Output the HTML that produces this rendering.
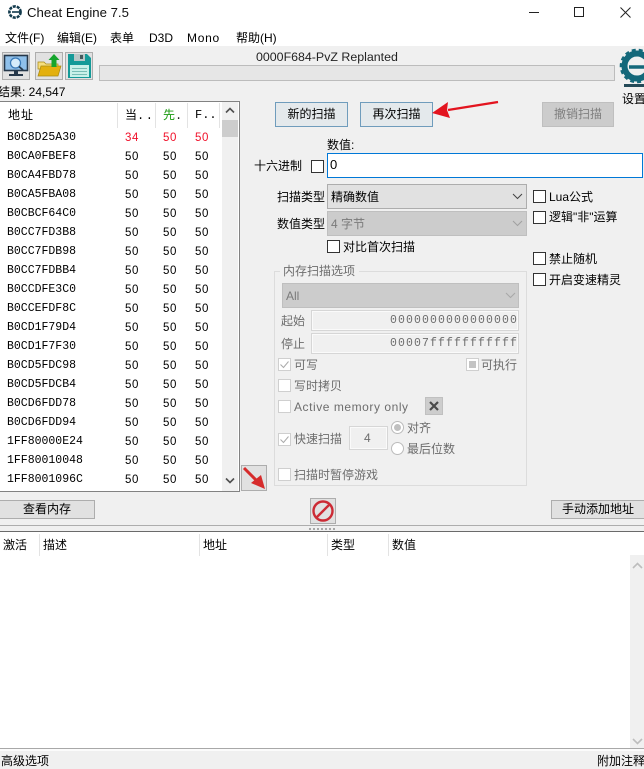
<!DOCTYPE html>
<html lang="zh"><head><meta charset="utf-8"><title>Cheat Engine 7.5</title>
<style>
html,body{margin:0;padding:0}
body{width:644px;height:769px;position:relative;overflow:hidden;background:#f0f0f0;font:12px "Liberation Sans","Noto Sans CJK SC",sans-serif;color:#000}
.a,.t,.b,.c,.r,.cell{position:absolute;box-sizing:border-box}
.t{white-space:nowrap;line-height:16px}
.g{color:#6d6d6d}
.b{background:#e1e1e1;border:1px solid #adadad;text-align:center;white-space:nowrap;line-height:22px}
.c{width:13px;height:13px;background:#fff;border:1px solid #333}
.d{border-color:#cfcfcf}
.r{width:13px;height:13px;border-radius:50%;background:#fff;border:1px solid #bbb}
.cell{white-space:nowrap;line-height:14px;margin-top:1px}
.ad{left:7px;font:11.5px "Liberation Mono",monospace;line-height:14px}
.v{font-size:11.5px;letter-spacing:.6px}
.red{color:#f0102a}
.hs{position:absolute;width:1px;background:#e3e3e3}
</style></head><body>
<div class="a" style="left:0;top:0;width:644px;height:46px;background:#fff"></div>
<svg class="a" style="left:7px;top:4px" width="15" height="16" viewBox="0 0 15 16"><circle cx="8" cy="8" r="5.6" fill="none" stroke="#123a4c" stroke-width="2.6" stroke-dasharray="3 1"/><path d="M5 8h8" stroke="#123a4c" stroke-width="1.6"/></svg>
<div class="t" style="left:27px;top:5px;font-size:13.2px;color:#111">Cheat Engine 7.5</div>
<div class="a" style="left:529px;top:12px;width:10px;height:1px;background:#222"></div>
<div class="a" style="left:574px;top:7px;width:10px;height:10px;border:1px solid #222"></div>
<svg class="a" style="left:620px;top:7px" width="11" height="11"><path d="M.5.5l10 10M10.500.5l-10 10" stroke="#222" fill="none"/></svg>

<div class="t" style="left:5px;top:30px">文件(F)</div>
<div class="t" style="left:57px;top:30px">编辑(E)</div>
<div class="t" style="left:110px;top:30px">表单</div>
<div class="t" style="left:149px;top:30px">D3D</div>
<div class="t" style="left:187px;top:30px;letter-spacing:.7px">Mono</div>
<div class="t" style="left:236px;top:30px">帮助(H)</div>

<!-- toolbar -->
<div class="a" style="left:2px;top:52px;width:28px;height:28px;background:#e1e1e1;border:1px solid #adadad"></div>
<svg class="a" style="left:3px;top:53px" width="26" height="26" viewBox="0 0 26 26"><rect x="1.500" y="2.500" width="23" height="15" fill="#8fc0ea" stroke="#26384a" stroke-width="1.600"/><rect x="11" y="18" width="4" height="3" fill="#26384a"/><rect x="6" y="21" width="14" height="2" fill="#26384a"/><circle cx="12.500" cy="10" r="5" fill="#d5ecfb" stroke="#3a7ab8" stroke-width="1.300"/><path d="M16 13.500l4 3.500" stroke="#26384a" stroke-width="1.800"/></svg>
<div class="a" style="left:35px;top:52px;width:28px;height:28px;background:#e1e1e1;border:1px solid #adadad"></div>
<svg class="a" style="left:36px;top:53px" width="26" height="26" viewBox="0 0 26 26"><path d="M2 9h6l2 2h12v5H2z" fill="#f6de7e" stroke="#a98912" stroke-width=".7"/><path d="M2 23l3-10h20l-3 10z" fill="#e3b00f" stroke="#a98912" stroke-width=".7"/><path d="M18 1l5.500 6H20.500v7h-5V7h-3z" fill="#15a52d"/></svg>
<div class="a" style="left:65px;top:52px;width:28px;height:28px;background:#e1e1e1;border:1px solid #adadad"></div>
<svg class="a" style="left:66px;top:53px" width="26" height="26" viewBox="0 0 26 26"><path d="M2 1h19l4 4v20H2z" fill="#149a98"/><rect x="8" y="1" width="11" height="7" fill="#b9c7c7"/><rect x="14" y="2" width="3" height="4" fill="#46595c"/><rect x="4" y="12" width="19" height="12" fill="#c9f0e9"/><path d="M6 15.500h15M6 18.500h15M6 21.500h15" stroke="#78bdb5"/></svg>

<div class="t" style="left:256px;top:49px;font-size:12.4px;color:#222">0000F684-PvZ Replanted</div>
<div class="a" style="left:99px;top:65px;width:516px;height:16px;background:#e6e6e6;border:1px solid #bcbcbc"></div>

<svg class="a" style="left:618px;top:46px" width="26" height="44" viewBox="0 0 26 44"><circle cx="19" cy="20" r="12.500" fill="none" stroke="#14687a" stroke-width="6"/><circle cx="19" cy="20" r="16" fill="none" stroke="#14687a" stroke-width="2.600" stroke-dasharray="4 3"/><path d="M11 21h15" stroke="#14687a" stroke-width="3.500"/><rect x="6" y="38" width="20" height="3" fill="#244a58"/></svg>
<div class="t" style="left:622px;top:91px">设置</div>
<div class="t" style="left:-2px;top:84px">结果: 24,547</div>

<!-- scan list -->
<div class="a" style="left:0;top:101px;width:240px;height:391px;background:#fff;border:1px solid #828282;border-left:0"></div>
<div class="hs" style="left:117px;top:103px;height:25px"></div><div class="hs" style="left:155px;top:103px;height:25px"></div><div class="hs" style="left:187px;top:103px;height:25px"></div><div class="hs" style="left:219px;top:103px;height:25px"></div>
<div class="t" style="left:8px;top:107px;letter-spacing:1px">地址</div>
<div class="t" style="left:125px;top:107px">当<span style="letter-spacing:1.500px;font-family:'Liberation Mono'">..</span></div>
<div class="t" style="left:163px;top:107px;color:#1a9a10">先<span style="font-family:'Liberation Mono';color:#222">.</span></div>
<div class="t" style="left:195px;top:107px;font-family:'Liberation Mono'">F..</div>
<div class="a" style="left:222px;top:102px;width:16px;height:389px;background:#f0f0f0"></div>
<div class="a" style="left:222px;top:120px;width:16px;height:17px;background:#cdcdcd"></div>
<svg class="a" style="left:225px;top:107px" width="10" height="7"><path d="M1 5.500l4-4 4 4" fill="none" stroke="#505050" stroke-width="1.600"/></svg>
<svg class="a" style="left:225px;top:477px" width="10" height="7"><path d="M1 1.500l4 4 4-4" fill="none" stroke="#505050" stroke-width="1.600"/></svg>

<div class="cell ad" style="top:130px">B0C8D25A30</div><div class="cell v red" style="left:125px;top:130px">34</div><div class="cell v red" style="left:163px;top:130px">50</div><div class="cell v red" style="left:195px;top:130px">50</div>
<div class="cell ad" style="top:149px">B0CA0FBEF8</div><div class="cell v" style="left:125px;top:149px">50</div><div class="cell v" style="left:163px;top:149px">50</div><div class="cell v" style="left:195px;top:149px">50</div>
<div class="cell ad" style="top:168px">B0CA4FBD78</div><div class="cell v" style="left:125px;top:168px">50</div><div class="cell v" style="left:163px;top:168px">50</div><div class="cell v" style="left:195px;top:168px">50</div>
<div class="cell ad" style="top:187px">B0CA5FBA08</div><div class="cell v" style="left:125px;top:187px">50</div><div class="cell v" style="left:163px;top:187px">50</div><div class="cell v" style="left:195px;top:187px">50</div>
<div class="cell ad" style="top:206px">B0CBCF64C0</div><div class="cell v" style="left:125px;top:206px">50</div><div class="cell v" style="left:163px;top:206px">50</div><div class="cell v" style="left:195px;top:206px">50</div>
<div class="cell ad" style="top:225px">B0CC7FD3B8</div><div class="cell v" style="left:125px;top:225px">50</div><div class="cell v" style="left:163px;top:225px">50</div><div class="cell v" style="left:195px;top:225px">50</div>
<div class="cell ad" style="top:244px">B0CC7FDB98</div><div class="cell v" style="left:125px;top:244px">50</div><div class="cell v" style="left:163px;top:244px">50</div><div class="cell v" style="left:195px;top:244px">50</div>
<div class="cell ad" style="top:263px">B0CC7FDBB4</div><div class="cell v" style="left:125px;top:263px">50</div><div class="cell v" style="left:163px;top:263px">50</div><div class="cell v" style="left:195px;top:263px">50</div>
<div class="cell ad" style="top:282px">B0CCDFE3C0</div><div class="cell v" style="left:125px;top:282px">50</div><div class="cell v" style="left:163px;top:282px">50</div><div class="cell v" style="left:195px;top:282px">50</div>
<div class="cell ad" style="top:301px">B0CCEFDF8C</div><div class="cell v" style="left:125px;top:301px">50</div><div class="cell v" style="left:163px;top:301px">50</div><div class="cell v" style="left:195px;top:301px">50</div>
<div class="cell ad" style="top:320px">B0CD1F79D4</div><div class="cell v" style="left:125px;top:320px">50</div><div class="cell v" style="left:163px;top:320px">50</div><div class="cell v" style="left:195px;top:320px">50</div>
<div class="cell ad" style="top:339px">B0CD1F7F30</div><div class="cell v" style="left:125px;top:339px">50</div><div class="cell v" style="left:163px;top:339px">50</div><div class="cell v" style="left:195px;top:339px">50</div>
<div class="cell ad" style="top:358px">B0CD5FDC98</div><div class="cell v" style="left:125px;top:358px">50</div><div class="cell v" style="left:163px;top:358px">50</div><div class="cell v" style="left:195px;top:358px">50</div>
<div class="cell ad" style="top:377px">B0CD5FDCB4</div><div class="cell v" style="left:125px;top:377px">50</div><div class="cell v" style="left:163px;top:377px">50</div><div class="cell v" style="left:195px;top:377px">50</div>
<div class="cell ad" style="top:396px">B0CD6FDD78</div><div class="cell v" style="left:125px;top:396px">50</div><div class="cell v" style="left:163px;top:396px">50</div><div class="cell v" style="left:195px;top:396px">50</div>
<div class="cell ad" style="top:415px">B0CD6FDD94</div><div class="cell v" style="left:125px;top:415px">50</div><div class="cell v" style="left:163px;top:415px">50</div><div class="cell v" style="left:195px;top:415px">50</div>
<div class="cell ad" style="top:434px">1FF80000E24</div><div class="cell v" style="left:125px;top:434px">50</div><div class="cell v" style="left:163px;top:434px">50</div><div class="cell v" style="left:195px;top:434px">50</div>
<div class="cell ad" style="top:453px">1FF80010048</div><div class="cell v" style="left:125px;top:453px">50</div><div class="cell v" style="left:163px;top:453px">50</div><div class="cell v" style="left:195px;top:453px">50</div>
<div class="cell ad" style="top:472px">1FF8001096C</div><div class="cell v" style="left:125px;top:472px">50</div><div class="cell v" style="left:163px;top:472px">50</div><div class="cell v" style="left:195px;top:472px">50</div>

<!-- scan buttons -->
<div class="b" style="left:275px;top:102px;width:73px;height:25px;border-color:#6f9cbc;background:#e4e9ec">新的扫描</div>
<div class="b" style="left:360px;top:102px;width:73px;height:25px;border-color:#6f9cbc;background:#e4e9ec">再次扫描</div>
<div class="b g" style="left:542px;top:102px;width:72px;height:25px;background:#cccccc;border-color:#bfbfbf;color:#7f7f7f">撤销扫描</div>
<svg class="a" style="left:430px;top:96px" width="72" height="26" viewBox="0 0 72 26"><path d="M68 6 18 14" stroke="#e3141f" stroke-width="2.400"/><path d="M2 17 18 6l-1 8 3 8z" fill="#e3141f"/></svg>

<div class="t" style="left:327px;top:137px">数值:</div>
<div class="t" style="left:254px;top:158px">十六进制</div>
<div class="c" style="left:311px;top:160px"></div>
<div class="a" style="left:327px;top:153px;width:316px;height:25px;background:#fff;border:1px solid #0078d7"></div>
<div class="t" style="left:330px;top:157px;font-size:13px">0</div>

<div class="t" style="left:277px;top:189px">扫描类型</div>
<div class="a" style="left:327px;top:184px;width:200px;height:25px;background:#e1e1e1;border:1px solid #adadad"></div>
<div class="t" style="left:331px;top:189px">精确数值</div>
<svg class="a" style="left:512px;top:193px" width="11" height="7"><path d="M1 1l4.500 4.500L10 1" fill="none" stroke="#444"/></svg>
<div class="t" style="left:277px;top:216px">数值类型</div>
<div class="a" style="left:327px;top:211px;width:200px;height:25px;background:#cccccc;border:1px solid #bfbfbf"></div>
<div class="t" style="left:331px;top:216px;color:#7a7a7a">4 字节</div>
<svg class="a" style="left:512px;top:220px" width="11" height="7"><path d="M1 1l4.500 4.500L10 1" fill="none" stroke="#a0a0a0"/></svg>
<div class="c" style="left:327px;top:240px"></div>
<div class="t" style="left:343px;top:239px">对比首次扫描</div>

<div class="c" style="left:533px;top:190px"></div><div class="t" style="left:549px;top:189px">Lua公式</div>
<div class="c" style="left:533px;top:211px"></div><div class="t" style="left:549px;top:209px">逻辑"非"运算</div>
<div class="c" style="left:533px;top:252px"></div><div class="t" style="left:549px;top:251px">禁止随机</div>
<div class="c" style="left:533px;top:273px"></div><div class="t" style="left:549px;top:272px">开启变速精灵</div>

<!-- group -->
<div class="a" style="left:274px;top:271px;width:253px;height:215px;border:1px solid #dcdcdc"></div>
<div class="t" style="left:280px;top:263px;padding:0 4px 0 3px;background:#f0f0f0;color:#6d6d6d">内存扫描选项</div>
<div class="a" style="left:282px;top:283px;width:237px;height:25px;background:#cccccc;border:1px solid #bfbfbf"></div>
<div class="t" style="left:286px;top:288px;color:#7a7a7a">All</div>
<svg class="a" style="left:505px;top:292px" width="11" height="7"><path d="M1 1l4.500 4.500L10 1" fill="none" stroke="#a8a8a8"/></svg>
<div class="t g" style="left:281px;top:313px">起始</div>
<div class="a" style="left:311px;top:310px;width:208px;height:21px;border:1px solid #d6d6d6;box-shadow:inset 0 0 0 1px #fafafa"></div>
<div class="t" style="left:390px;top:313px;width:127px;text-align:right;font:11.500px/16px 'Liberation Mono',monospace;letter-spacing:1.100px;color:#6d6d6d">0000000000000000</div>
<div class="t g" style="left:281px;top:336px">停止</div>
<div class="a" style="left:311px;top:333px;width:208px;height:21px;border:1px solid #d6d6d6;box-shadow:inset 0 0 0 1px #fafafa"></div>
<div class="t" style="left:390px;top:336px;width:127px;text-align:right;font:11.500px/16px 'Liberation Mono',monospace;letter-spacing:1.100px;color:#6d6d6d">00007fffffffffff</div>

<div class="c d" style="left:278px;top:358px"></div>
<svg class="a" style="left:279px;top:359px" width="11" height="11"><path d="M1.500 5.500l3 3 5-6" fill="none" stroke="#aaa"/></svg>
<div class="t g" style="left:294px;top:357px">可写</div>
<div class="c d" style="left:466px;top:358px"></div><div class="a" style="left:469px;top:361px;width:7px;height:7px;background:#c4c4c4"></div>
<div class="t g" style="left:481px;top:357px">可执行</div>
<div class="c d" style="left:278px;top:379px"></div><div class="t g" style="left:294px;top:378px">写时拷贝</div>
<div class="c d" style="left:278px;top:400px"></div><div class="t g" style="left:294px;top:399px;letter-spacing:.55px">Active memory only</div>
<div class="a" style="left:425px;top:397px;width:18px;height:18px;background:#cdcdcd;border:1px solid #c0c0c0"></div>
<svg class="a" style="left:429px;top:401px" width="10" height="10"><path d="M1 1l8 8M9 1l-8 8" stroke="#4a4a4a" stroke-width="2.200"/></svg>

<div class="c d" style="left:278px;top:433px"></div>
<svg class="a" style="left:279px;top:434px" width="11" height="11"><path d="M1.500 5.500l3 3 5-6" fill="none" stroke="#aaa"/></svg>
<div class="t g" style="left:294px;top:431px">快速扫描</div>
<div class="a" style="left:349px;top:426px;width:39px;height:24px;border:1px solid #d6d6d6;box-shadow:inset 0 0 0 1px #fafafa"></div>
<div class="t g" style="left:364px;top:430px">4</div>
<div class="r" style="left:391px;top:421px"></div><div class="a" style="left:394px;top:424px;width:7px;height:7px;border-radius:50%;background:#c0c0c0"></div>
<div class="t g" style="left:407px;top:420px">对齐</div>
<div class="r" style="left:391px;top:442px"></div>
<div class="t g" style="left:407px;top:441px">最后位数</div>
<div class="c d" style="left:278px;top:468px"></div><div class="t g" style="left:294px;top:467px">扫描时暂停游戏</div>

<div class="a" style="left:241px;top:465px;width:26px;height:26px;background:#e1e1e1;border:1px solid #adadad"></div>
<svg class="a" style="left:242px;top:466px" width="24" height="24" viewBox="0 0 24 24"><path d="M2 2 15 15" stroke="#d62b2b" stroke-width="3"/><path d="M9 17 19 9l4 14z" fill="#d62b2b"/></svg>
<div class="a" style="left:310px;top:498px;width:26px;height:26px;background:#e1e1e1;border:1px solid #adadad"></div>
<svg class="a" style="left:311px;top:499px" width="24" height="24" viewBox="0 0 24 24"><circle cx="12" cy="12" r="9.500" fill="none" stroke="#cc2b35" stroke-width="2.400"/><path d="M5.500 18.500 18.500 5.500" stroke="#cc2b35" stroke-width="2.400"/></svg>

<div class="b" style="left:-1px;top:500px;width:96px;height:19px;line-height:17px">查看内存</div>
<div class="b" style="left:551px;top:500px;width:94px;height:19px;line-height:17px">手动添加地址</div>

<div class="a" style="left:0;top:525px;width:644px;height:1px;background:#adadad"></div>
<div class="a" style="left:309px;top:528px;width:27px;height:2px;background:repeating-linear-gradient(90deg,#a8a8a8 0 2px,transparent 2px 4px)"></div>
<div class="a" style="left:0;top:531px;width:644px;height:1px;background:#6a6a6a"></div>
<div class="a" style="left:0;top:532px;width:644px;height:216px;background:#fff"></div>
<div class="hs" style="left:39px;top:534px;height:22px"></div><div class="hs" style="left:199px;top:534px;height:22px"></div><div class="hs" style="left:327px;top:534px;height:22px"></div><div class="hs" style="left:388px;top:534px;height:22px"></div>
<div class="t" style="left:3px;top:537px">激活</div>
<div class="t" style="left:43px;top:537px">描述</div>
<div class="t" style="left:203px;top:537px">地址</div>
<div class="t" style="left:331px;top:537px">类型</div>
<div class="t" style="left:392px;top:537px">数值</div>
<div class="a" style="left:630px;top:555px;width:14px;height:193px;background:#f0f0f0"></div>
<svg class="a" style="left:632px;top:562px" width="11" height="7"><path d="M1 6l4.500-4.500L10 6" fill="none" stroke="#bdbdbd" stroke-width="1.600"/></svg>
<svg class="a" style="left:632px;top:738px" width="11" height="7"><path d="M1 1l4.500 4.500L10 1" fill="none" stroke="#bdbdbd" stroke-width="1.600"/></svg>
<div class="a" style="left:0;top:748px;width:644px;height:1px;background:#a8a8a8"></div>
<div class="a" style="left:0;top:749px;width:644px;height:2px;background:#fbfbfb"></div>
<div class="t" style="left:1px;top:753px">高级选项</div>
<div class="t" style="left:597px;top:753px">附加注释</div>
</body></html>
